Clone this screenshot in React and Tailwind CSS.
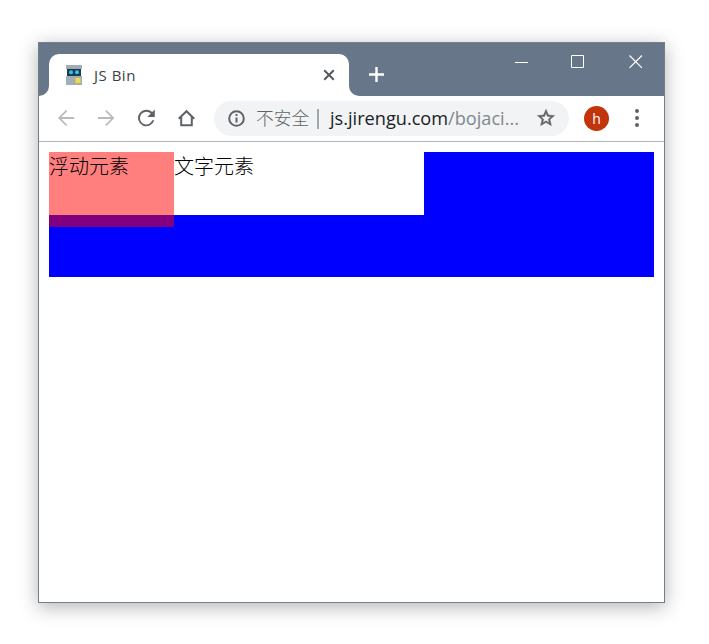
const cjk = "font-['Open_Sans','Noto_Sans_CJK_SC',sans-serif]";

function Favicon() {
  return (
    <svg width="18" height="22" viewBox="0 0 18 22" className="ml-[16px] shrink-0">
      <rect x="1" y="1" width="16" height="4" fill="#a3adb3" />
      <rect x="2" y="4" width="14" height="17" fill="#9aa5ad" />
      <rect x="1" y="12" width="16" height="9" fill="#a3adb5" />
      <rect x="2" y="5" width="14" height="7" fill="#153f50" />
      <circle cx="6" cy="8.3" r="2" fill="#45b9e8" />
      <circle cx="12" cy="8.3" r="2" fill="#45b9e8" />
      <rect x="10.5" y="14" width="5" height="5" fill="#f5d941" />
    </svg>
  );
}

function TitleBar() {
  return (
    <div className="flex h-[53px] bg-[#687689]">
      <div className="h-[10px] w-[10px] self-end bg-white">
        <div className="h-full w-full rounded-br-[10px] bg-[#687689]" />
      </div>
      <div className="mt-[10.5px] flex h-[42.5px] w-[300px] items-center rounded-t-[10px] bg-white">
        <Favicon />
        <span className="ml-[11px] flex-1 text-[15px] leading-[20px] tracking-[0.5px] text-[#3c4043]">JS Bin</span>
        <svg width="12" height="12" viewBox="0 0 12 12" className="mr-[14px]" stroke="#55595d" strokeWidth="2">
          <path d="M1.2 1.2l9.6 9.6M10.8 1.2l-9.6 9.6" />
        </svg>
      </div>
      <div className="h-[10px] w-[10px] self-end bg-white">
        <div className="h-full w-full rounded-bl-[10px] bg-[#687689]" />
      </div>
      <svg width="16" height="16" viewBox="0 0 16 16" className="mt-[24px] ml-[10px]" stroke="#fff" strokeWidth="2.4">
        <path d="M7.5 0v15M0 7.5h15" />
      </svg>
      <div className="mt-[12px] mr-[21px] ml-auto flex h-[14px] gap-[43px]">
        <svg width="14" height="14" viewBox="0 0 14 14" stroke="#fff">
          <path d="M0 7.5h13" />
        </svg>
        <svg width="14" height="14" viewBox="0 0 14 14" stroke="#fff" fill="none" className="-ml-px">
          <path d="M.5 .5h12v12h-12z" />
        </svg>
        <svg width="14" height="14" viewBox="0 0 14 14" stroke="#fff" strokeWidth="1.2" className="ml-px">
          <path d="M.5 .5l12.4 12.4M12.9 .5L.5 12.9" />
        </svg>
      </div>
    </div>
  );
}

function Toolbar() {
  return (
    <div className="flex h-[46px] items-center border-b border-[#b3b5b9] pl-[15px]">
      <div className="mb-px flex gap-4">
        <svg width="24" height="24" viewBox="0 0 24 24" fill="#b9babc">
          <path d="M20.2 11.1H7.4l5.8-5.9L12 4l-8 8 8 8 1.2-1.2-5.8-5.9h12.8z" />
        </svg>
        <svg width="24" height="24" viewBox="0 0 24 24" fill="#b9babc">
          <path d="M12.4 4l-1.2 1.2 5.8 5.9H4v1.8h13l-5.8 5.9 1.2 1.2 8-8z" />
        </svg>
        <svg width="24" height="24" viewBox="0 0 24 24" fill="#5f6368">
          <path d="M18.2 6.1A8.3 8.3 0 1 0 20.3 14.3h-2.1A6.3 6.3 0 1 1 12.4 5.8c1.7 0 3.2.7 4.3 1.8L13.4 11h7.4V3.5z" />
        </svg>
        <svg width="24" height="24" viewBox="0 0 24 24" fill="none" stroke="#5f6368" strokeWidth="2">
          <path d="M4.7 12.8L12.5 5.2l7.8 7.6M7.2 11v8.2h10.6V11" />
        </svg>
      </div>
      <div className="ml-[16px] flex h-[35px] w-[355px] items-center rounded-full bg-[#f1f3f4]">
        <svg width="20" height="20" viewBox="0 0 20 20" fill="none" stroke="#5f6368" strokeWidth="2" className="mb-px ml-[12px]">
          <circle cx="10.5" cy="10.5" r="7.3" />
          <path d="M10.5 6v2M10.5 9.5v5" />
        </svg>
        <span className="mb-[3px] ml-[10px] w-[54px] font-['Noto_Sans_CJK_SC',sans-serif] text-[17.7px] leading-[24px] font-light whitespace-nowrap text-[#5f6368]">不安全</span>
        <span className="ml-[7px] h-[20px] w-[2px] bg-[#a3a6aa]" />
        <svg width="200" height="30" className="ml-[11px] shrink-0 overflow-visible">
          <text x="0" y="21" fill="#202124" textLength="189" lengthAdjust="spacingAndGlyphs" className="text-[18.5px]">
            js.jirengu.com<tspan fill="#80868b">/bojaci...</tspan>
          </text>
        </svg>
        <svg width="20" height="20" viewBox="0 0 24 24" fill="#5f6368" stroke="#5f6368" strokeWidth=".5" className="mb-px ml-[6px] shrink-0">
          <path d="M22.4 9l-7.4-.6L12 1.5 9 8.4 1.6 9l5.6 4.9L5.5 21.2 12 17.3l6.5 3.9-1.7-7.3L22.4 9zM12 15.4l-3.76 2.27 1-4.28-3.32-2.88 4.38-.38L12 6.1l1.71 4.04 4.38.38-3.32 2.88 1 4.28L12 15.4z" />
        </svg>
      </div>
      <div className="ml-[15px] flex h-[25px] w-[25px] items-center justify-center rounded-full bg-[#c0350c] text-[14px] leading-none text-white">h</div>
      <div className="mb-px ml-[25.5px] flex w-[4px] flex-col gap-[3px]">
        <span className="h-[4px] rounded-full bg-[#5f6368]" />
        <span className="h-[4px] rounded-full bg-[#5f6368]" />
        <span className="h-[4px] rounded-full bg-[#5f6368]" />
      </div>
    </div>
  );
}

export default function App() {
  return (
    <div className={`h-[644px] w-[709px] overflow-hidden bg-white pt-[42px] pl-[38px] ${cjk}`}>
      <div className="h-[561px] w-[627px] border border-[#717f8b] bg-white shadow-[0_4px_18px_rgba(0,0,0,0.3)]">
        <TitleBar />
        <Toolbar />
        <div className="p-[10px] font-['Noto_Sans_CJK_SC',sans-serif] text-[20px] leading-[27px] font-light text-black">
          <div className="h-[125px] bg-[#0000ff]">
            <div className="h-[63px] w-[375px] bg-white">
              <div className="float-left h-[75px] w-[125px] bg-[#ff0000]/50">浮动元素</div>
              文字元素
            </div>
          </div>
        </div>
      </div>
    </div>
  );
}
